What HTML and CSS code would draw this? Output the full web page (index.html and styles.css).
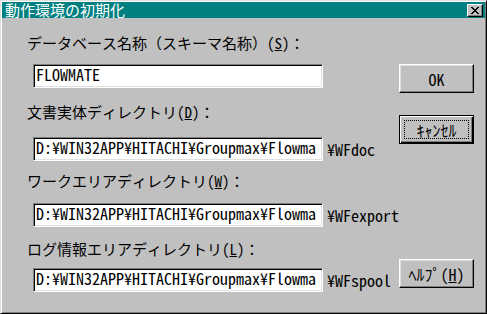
FILE: index.html
```html
<!DOCTYPE html>
<html lang="ja">
<head>
<meta charset="utf-8">
<title>動作環境の初期化</title>
<link rel="stylesheet" href="styles.css">
</head>
<body>
<div class="window">
  <div class="titlebar">
    <span class="title">動作環境の初期化</span>
    <button class="close" aria-label="閉じる">
      <svg width="8" height="7" viewBox="0 0 8 7" shape-rendering="crispEdges"><path fill="#000" d="M0 0h2v1H0zM6 0h2v1H6zM1 1h2v1H1zM5 1h2v1H5zM2 2h4v1H2zM3 3h2v1H3zM2 4h4v1H2zM1 5h2v1H1zM5 5h2v1H5zM0 6h2v1H0zM6 6h2v1H6z"/></svg>
    </button>
  </div>
  <div class="content">
    <div class="fields">
      <div class="group group-db">
        <div class="label">データベース名称（スキーマ名称）(<u>S</u>)：</div>
        <div class="field-row"><div class="edit">FLOWMATE</div></div>
      </div>
      <div class="group group-doc">
        <div class="label">文書実体ディレクトリ(<u>D</u>)：</div>
        <div class="field-row"><div class="edit">D:¥WIN32APP¥HITACHI¥Groupmax¥Flowma</div><span class="suffix">¥WFdoc</span></div>
      </div>
      <div class="group group-work">
        <div class="label">ワークエリアディレクトリ(<u>W</u>)：</div>
        <div class="field-row"><div class="edit">D:¥WIN32APP¥HITACHI¥Groupmax¥Flowma</div><span class="suffix">¥WFexport</span></div>
      </div>
      <div class="group group-log">
        <div class="label">ログ情報エリアディレクトリ(<u>L</u>)：</div>
        <div class="field-row"><div class="edit">D:¥WIN32APP¥HITACHI¥Groupmax¥Flowma</div><span class="suffix">¥WFspool</span></div>
      </div>
    </div>
    <div class="buttons">
      <button class="btn btn-ok">OK</button>
      <button class="btn btn-cancel">ｷｬﾝｾﾙ</button>
      <button class="btn btn-help">ﾍﾙﾌﾟ(<u>H</u>)</button>
    </div>
  </div>
</div>
</body>
</html>
```
FILE: styles.css
```css
html, body {
  margin: 0;
  background: #c0c0c0;
}

.window {
  width: 487px;
  height: 314px;
  box-sizing: border-box;
  border: 1px solid;
  border-color: #dfdfdf #000 #000 #dfdfdf;
  padding: 1px;
  box-shadow: inset 1px 1px #fff, inset -1px -1px #808080;
  background: #c0c0c0;
  color: #000;
  font-family: "Noto Sans CJK JP", sans-serif;
  display: flex;
  flex-direction: column;
}

.titlebar {
  height: 16px;
  flex: none;
  background: #008080;
  color: #fff;
  display: flex;
  align-items: center;
  justify-content: space-between;
  padding: 0 2px 0 3px;
}

.title {
  font-size: 15px;
  line-height: 16px;
  white-space: nowrap;
}

.close {
  appearance: none;
  width: 16px;
  height: 13px;
  margin-top: 1px;
  padding: 0;
  box-sizing: border-box;
  background: #c0c0c0;
  border: 1px solid;
  border-color: #fff #000 #000 #fff;
  box-shadow: inset -1px -1px #808080;
  display: flex;
  align-items: center;
  justify-content: center;
}

.close svg {
  display: block;
}

.content {
  flex: 1;
  display: flex;
  padding: 0 11px 0 25px;
}

.fields {
  flex: 1;
  display: flex;
  flex-direction: column;
}

.group {
  display: flex;
  flex-direction: column;
}

.label {
  font-family: "Noto Sans Mono CJK JP", "Noto Sans CJK JP", monospace;
  font-size: 15px;
  line-height: 16px;
  white-space: nowrap;
}

.label u,
.btn u {
  text-underline-offset: 1px;
}

.group-db { margin-top: 17px; }
.group-db .label { margin-bottom: 13px; }
.group-doc { margin-top: 16px; }
.group-doc .label { margin-bottom: 17px; }
.group-work { margin-top: 12px; }
.group-work .label { margin-bottom: 14px; }
.group-log { margin-top: 14px; }
.group-log .label { margin-bottom: 11px; }

.field-row {
  display: flex;
  align-items: center;
  padding-left: 6px;
}

.edit {
  width: 290px;
  height: 24px;
  flex: none;
  box-sizing: border-box;
  background: #fff;
  border: 1px solid;
  border-color: #808080 #fff #fff #808080;
  box-shadow: inset 1px 1px #000, inset -1px -1px #dfdfdf;
  padding: 0 2px;
  font-size: 16px;
  line-height: 18px;
  white-space: nowrap;
  font-feature-settings: "hwid";
}

.suffix {
  margin-left: 4px;
  font-size: 16px;
  line-height: 16px;
  white-space: nowrap;
  font-feature-settings: "hwid";
}

.buttons {
  width: 75px;
  flex: none;
  display: flex;
  flex-direction: column;
}

.btn {
  appearance: none;
  position: relative;
  width: 75px;
  height: 29px;
  box-sizing: border-box;
  padding: 0;
  background: #c0c0c0;
  border: 1px solid;
  border-color: #fff #000 #000 #fff;
  box-shadow: inset -1px -1px #808080, inset 1px 1px #dfdfdf;
  color: #000;
  font-family: "Noto Sans CJK JP", sans-serif;
  font-size: 16px;
  line-height: 16px;
  display: flex;
  align-items: center;
  justify-content: center;
  white-space: nowrap;
  font-feature-settings: "hwid";
}

.btn-ok { margin-top: 46px; }

.btn-cancel {
  margin-top: 22px;
  border-color: #000;
  box-shadow: inset 1px 1px #fff, inset -1px -1px #000, inset -2px -2px #808080;
}

.btn-cancel::after {
  content: "";
  position: absolute;
  inset: 4px;
  border: 1px dotted #000;
}

.btn-help { margin-top: 115px; }
```
